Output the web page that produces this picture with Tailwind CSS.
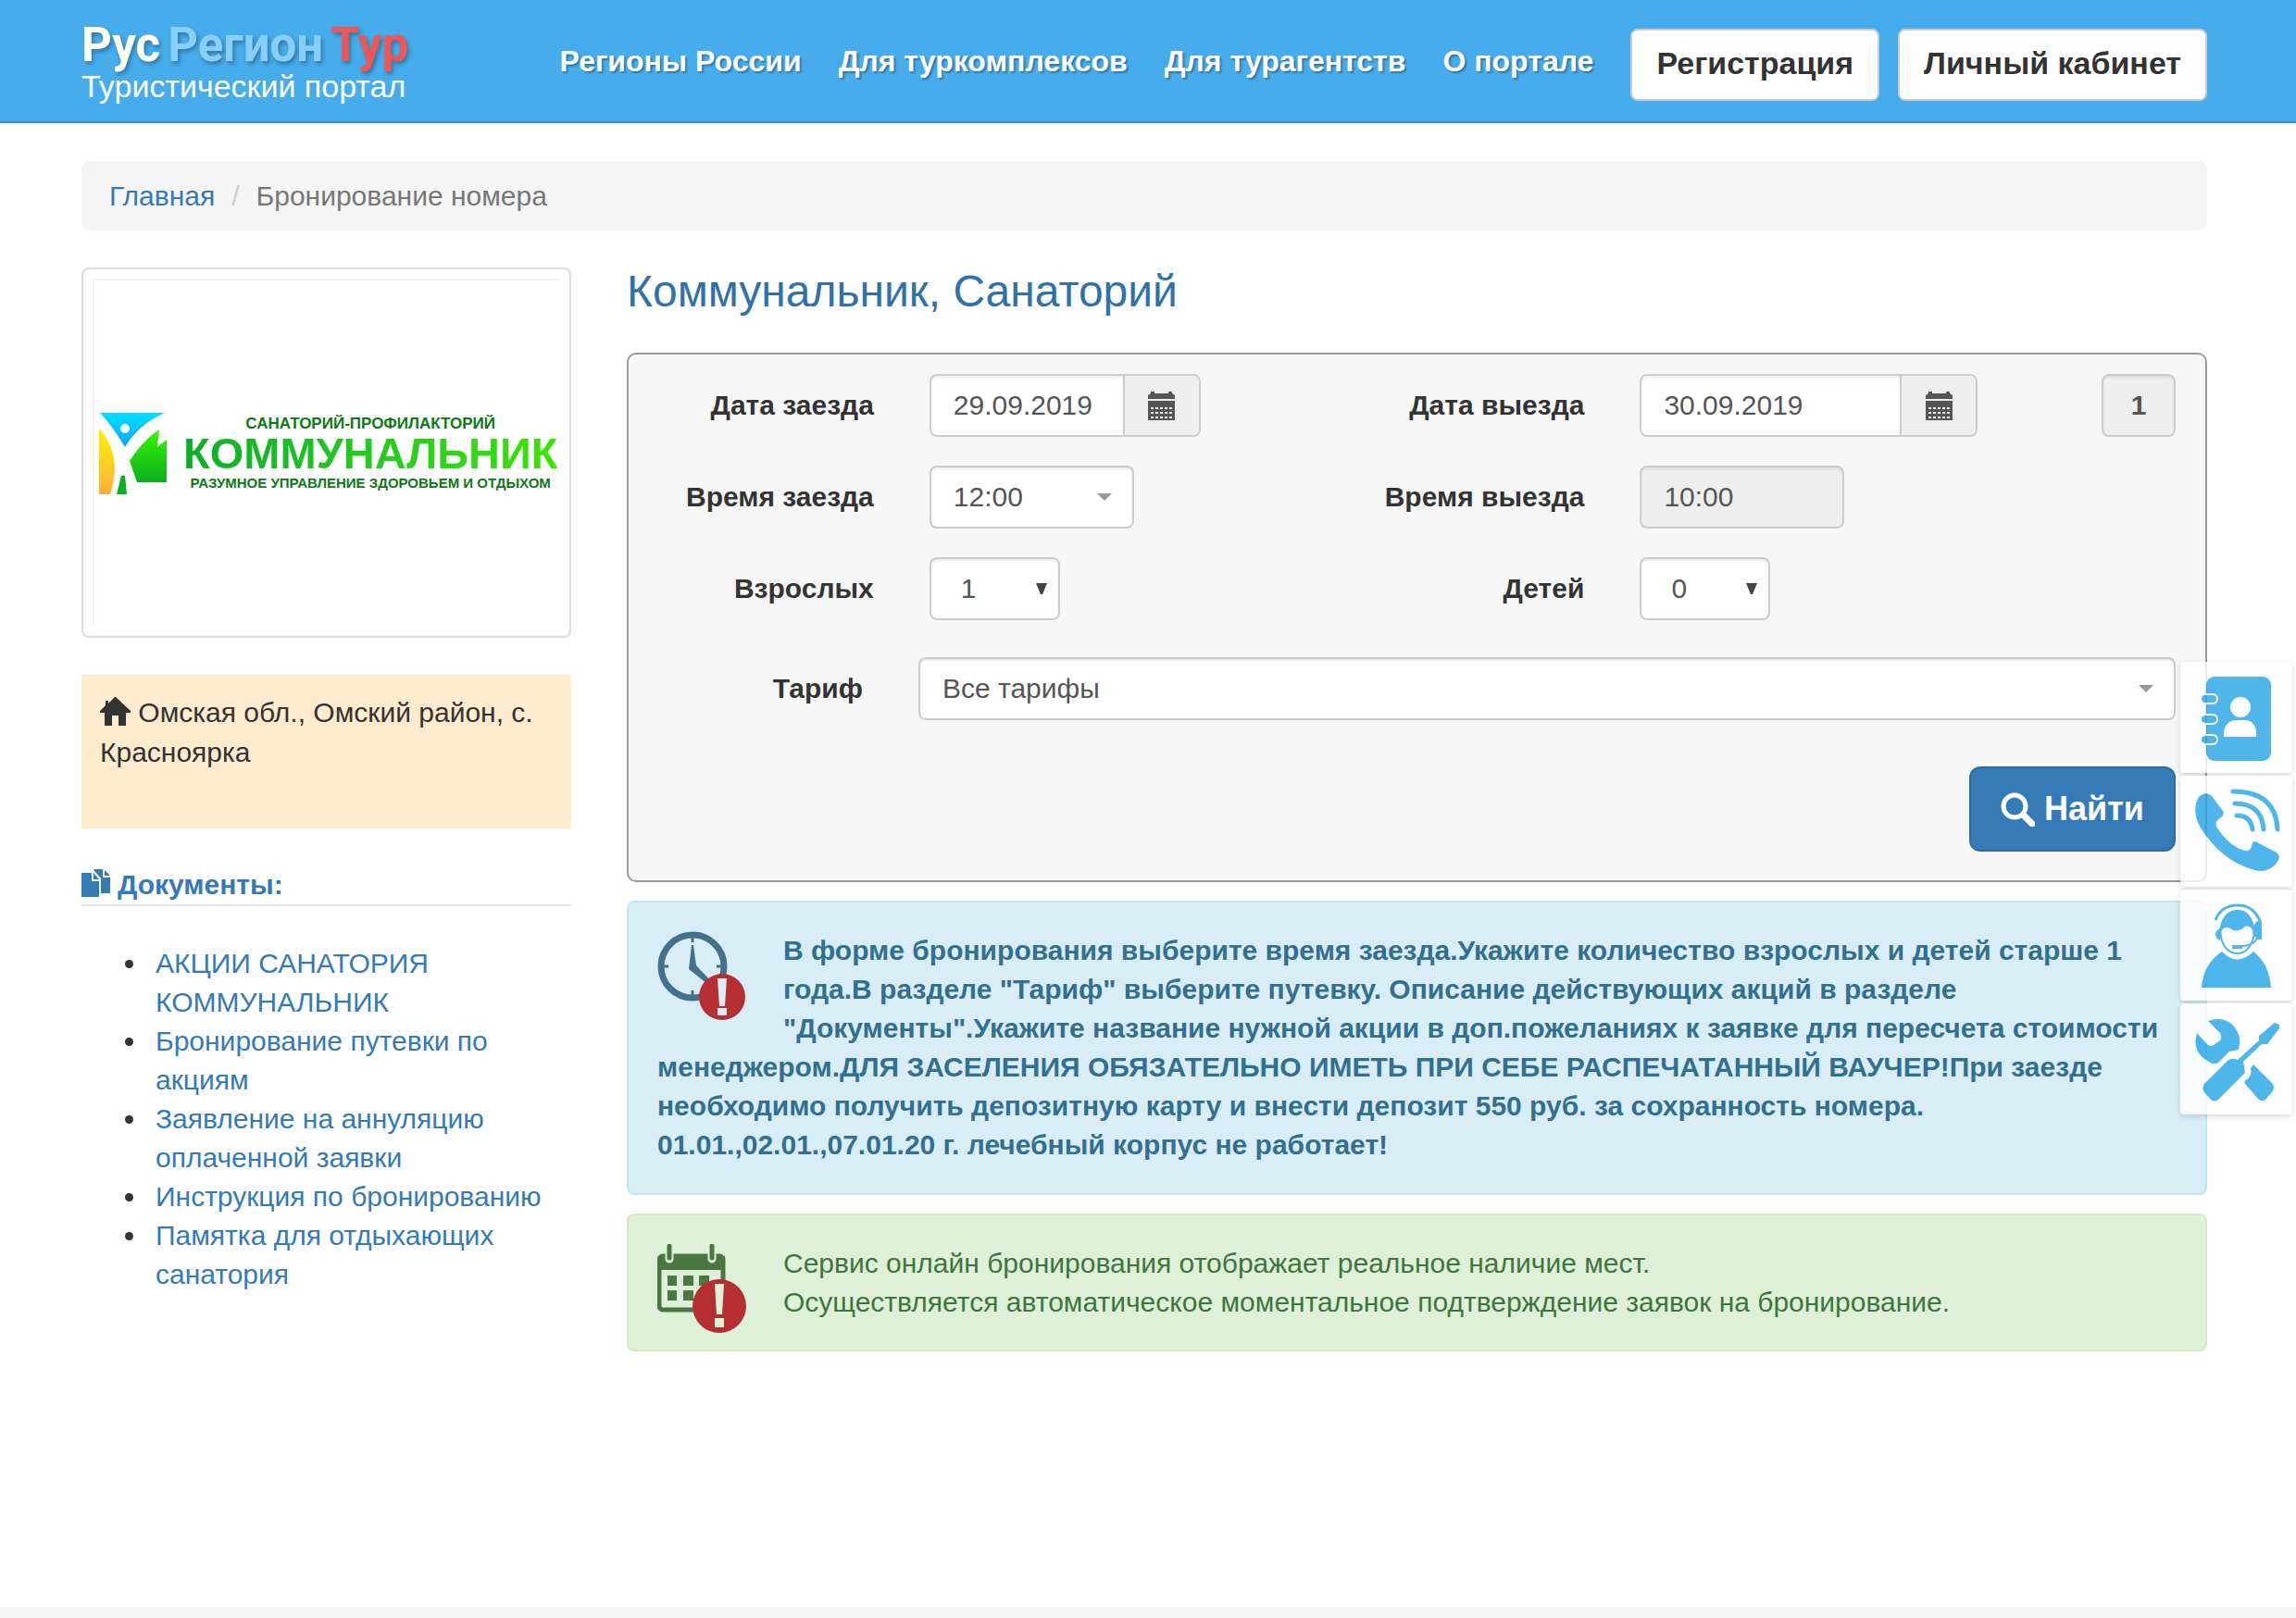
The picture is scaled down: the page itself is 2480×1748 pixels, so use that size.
<!DOCTYPE html>
<html lang="ru">
<head>
<meta charset="utf-8">
<meta name="viewport" content="width=device-width, initial-scale=1">
<title>Бронирование номера</title>
<script src="https://cdn.jsdelivr.net/npm/@tailwindcss/browser@4"></script>
</head>
<body class="flex min-h-screen flex-col bg-white font-['Liberation_Sans',Arial,sans-serif] text-[30px] leading-[42px] text-[#333]">

<header class="border-b-2 border-[#2d8fcf] bg-[#46aceb] pr-24 pl-[88px]">
  <div class="flex h-[131px] items-center justify-between">
    <a href="#" class="flex flex-col pt-1 text-white">
      <span class="flex gap-2 font-[Roboto,sans-serif] text-[51px] leading-[50px] font-bold [text-shadow:2px_3px_4px_rgba(0,0,0,0.3)]"><span class="text-[#fffff0]">Рус</span><span class="text-[#87cefa]">Регион</span><span class="text-[#ef5655]">Тур</span></span>
      <span class="text-[34px] leading-[38px]">Туристический портал</span>
    </a>
    <div class="flex items-center gap-10">
      <nav class="flex gap-10 text-[32px] font-bold text-white [text-shadow:2px_2px_2px_rgba(0,0,0,0.3)]">
        <a href="#">Регионы России</a>
        <a href="#">Для туркомплексов</a>
        <a href="#">Для турагентств</a>
        <a href="#">О портале</a>
      </nav>
      <div class="mt-2 flex gap-5 text-[34px] font-bold">
        <button type="button" class="h-[78px] rounded-lg border-2 border-[#ccc] bg-white px-[26px] pb-1">Регистрация</button>
        <button type="button" class="h-[78px] rounded-lg border-2 border-[#ccc] bg-white px-[26px] pb-1">Личный кабинет</button>
      </div>
    </div>
  </div>
</header>

<main class="pt-[41px] pr-24 pl-[88px]">
  <nav class="flex h-[75px] items-center gap-[18px] rounded-lg bg-[#f5f5f5] px-[30px]" aria-label="Навигация">
    <a href="#" class="text-[#337ab7]">Главная</a><span class="text-[#ccc]">/</span><span class="text-[#777]">Бронирование номера</span>
  </nav>

  <div class="mt-10 grid grid-cols-4 gap-[60px]">
    <aside>
      <div class="rounded-lg border-2 border-[#ddd] p-[10px]">
        <div class="flex h-[376px] items-center gap-[18px] border-t-2 border-l-2 border-[#f3f3f3] pl-[5px]">
          <svg class="h-[89px] w-[73px] shrink-0" viewBox="0 0 73 89" aria-hidden="true">
            <defs>
              <linearGradient id="sky" x1="0" y1="0" x2="0" y2="1"><stop offset="0" stop-color="#00e0ff"/><stop offset="1" stop-color="#00a6ff"/></linearGradient>
              <linearGradient id="sun" x1="0" y1="0" x2="0" y2="1"><stop offset="0" stop-color="#fff200"/><stop offset="1" stop-color="#fbb03b"/></linearGradient>
              <linearGradient id="leaf" x1="0" y1="0" x2="0" y2="1"><stop offset="0" stop-color="#39f500"/><stop offset="1" stop-color="#0aae20"/></linearGradient>
            </defs>
            <path d="M1 0H71Q43 12 28 37Q15 15 1 0Z" fill="url(#sky)"/>
            <circle cx="28" cy="17" r="5" fill="#fff"/>
            <path d="M0 17Q26 46 12 88H0Z" fill="url(#sun)"/>
            <path d="M24 68H28L30 88H19Z" fill="#0aae20"/>
            <path d="M33 52Q47 30 65 18L63 37L73 29V75H41Z" fill="url(#leaf)"/>
          </svg>
          <div class="flex flex-col items-center font-bold whitespace-nowrap text-[#0b7a14]">
            <span class="text-[17px] leading-[18px]">САНАТОРИЙ-ПРОФИЛАКТОРИЙ</span>
            <span class="bg-linear-to-r from-[#0aae28] to-[#39e600] bg-clip-text text-[47px] leading-[46px] text-transparent">КОММУНАЛЬНИК</span>
            <span class="text-[15px] leading-[18px]">РАЗУМНОЕ УПРАВЛЕНИЕ ЗДОРОВЬЕМ И ОТДЫХОМ</span>
          </div>
        </div>
      </div>

      <div class="mt-10 bg-[#ffebcd] px-5 pt-5 pb-[61px]">
        <svg class="mb-2 inline h-[31px] w-[33px]" viewBox="0 0 33 31" aria-hidden="true"><path d="M16 0H17L33 15V17H28V31H20V20H13V31H5V17H0V15L6 9V4H9V7Z" fill="#333"/></svg>
        Омская обл., Омский район, с. Красноярка
      </div>

      <h2 class="mt-10 flex items-center gap-2 border-b-2 border-[#e5e5e5] font-bold text-[#337ab7]">
        <svg class="mb-1 h-[30px] w-[31px]" viewBox="0 0 31 30" aria-hidden="true"><path fill="#337ab7" d="M0 4H11V13H19V30H0ZM13 4L19 11H13ZM13 0H23V9H31V26H21V10L14 2ZM25 1L31 7H25Z"/></svg>
        Документы:
      </h2>
      <ul class="mt-[41px] list-disc pl-[72px]">
        <li class="pl-2"><a href="#" class="text-[#337ab7]">АКЦИИ САНАТОРИЯ КОММУНАЛЬНИК</a></li>
        <li class="pl-2"><a href="#" class="text-[#337ab7]">Бронирование путевки по акциям</a></li>
        <li class="pl-2"><a href="#" class="text-[#337ab7]">Заявление на аннуляцию оплаченной заявки</a></li>
        <li class="pl-2"><a href="#" class="text-[#337ab7]">Инструкция по бронированию</a></li>
        <li class="pl-2"><a href="#" class="text-[#337ab7]">Памятка для отдыхающих санатория</a></li>
      </ul>
    </aside>

    <section class="col-span-3">
      <h1 class="text-[48px] leading-[52px] text-[#3071a9]">Коммунальник, Санаторий</h1>

      <form class="mt-10 rounded-[10px] border-2 border-[#999] bg-[#f7f7f7] pt-[21px] pr-8 pb-[31px]">
        <div class="grid grid-cols-[265fr_421fr_227fr_579fr] items-center gap-x-[60px] gap-y-[31px]">
          <label for="d1" class="text-right font-bold">Дата заезда</label>
          <div class="flex h-[68px] w-[293px] rounded-lg border-2 border-[#ccc] bg-white text-[#555]">
            <input id="d1" type="text" value="29.09.2019" class="min-w-0 flex-1 rounded-l-lg pl-6 shadow-[inset_0_2px_2px_rgba(0,0,0,0.08)]">
            <button type="button" aria-label="Календарь" class="flex w-[82px] items-center justify-center rounded-r-md border-l-2 border-[#ccc] bg-[#eee]">
              <svg class="h-[31px] w-[29px]" viewBox="0 0 29 31" aria-hidden="true"><path fill="#555" d="M3 0H7V2H22V0H26V2L29 4V8H0V4L3 2Z"/><path fill="#555" d="M0 10H29V31H0Z"/><path stroke="#eee" stroke-width="2" stroke-dasharray="3 2" d="M3 18H26M3 23H26M3 28H26"/></svg>
            </button>
          </div>
          <label for="d2" class="text-right font-bold">Дата выезда</label>
          <div class="flex justify-between">
            <div class="flex h-[68px] w-[365px] rounded-lg border-2 border-[#ccc] bg-white text-[#555]">
              <input id="d2" type="text" value="30.09.2019" class="min-w-0 flex-1 rounded-l-lg pl-6 shadow-[inset_0_2px_2px_rgba(0,0,0,0.08)]">
              <button type="button" aria-label="Календарь" class="flex w-[82px] items-center justify-center rounded-r-md border-l-2 border-[#ccc] bg-[#eee]">
                <svg class="h-[31px] w-[29px]" viewBox="0 0 29 31" aria-hidden="true"><path fill="#555" d="M3 0H7V2H22V0H26V2L29 4V8H0V4L3 2Z"/><path fill="#555" d="M0 10H29V31H0Z"/><path stroke="#eee" stroke-width="2" stroke-dasharray="3 2" d="M3 18H26M3 23H26M3 28H26"/></svg>
              </button>
            </div>
            <input type="text" aria-label="Количество суток" value="1" readonly class="h-[68px] w-20 rounded-lg border-2 border-[#ccc] bg-[#eee] text-center font-bold text-[#555] shadow-[inset_0_2px_2px_rgba(0,0,0,0.08)]">
          </div>

          <label for="t1" class="text-right font-bold">Время заезда</label>
          <div class="relative h-[68px] w-[221px]">
            <select id="t1" class="size-full appearance-none rounded-lg border-2 border-[#ccc] bg-white pl-6 text-[#555] shadow-[inset_0_2px_2px_rgba(0,0,0,0.08)]"><option>12:00</option></select>
            <svg class="pointer-events-none absolute top-[30px] right-6 h-2 w-4" viewBox="0 0 16 8" aria-hidden="true"><path d="M0 0H16L8 8Z" fill="#999"/></svg>
          </div>
          <label for="t2" class="text-right font-bold">Время выезда</label>
          <input id="t2" type="text" value="10:00" disabled class="h-[68px] w-[221px] rounded-lg border-2 border-[#ccc] bg-[#eee] pl-6 text-[#555] shadow-[inset_0_2px_2px_rgba(0,0,0,0.08)]">

          <label for="a1" class="text-right font-bold">Взрослых</label>
          <div class="relative h-[68px] w-[141px]">
            <select id="a1" class="size-full appearance-none rounded-lg border-2 border-[#ccc] bg-white pl-8 text-[#555] shadow-[inset_0_2px_2px_rgba(0,0,0,0.08)]"><option>1</option></select>
            <svg class="pointer-events-none absolute top-7 right-[14px] h-3 w-3" viewBox="0 0 12 12" aria-hidden="true"><path d="M0 0H12L7 12H5Z" fill="#444"/></svg>
          </div>
          <label for="c1" class="text-right font-bold">Детей</label>
          <div class="relative h-[68px] w-[141px]">
            <select id="c1" class="size-full appearance-none rounded-lg border-2 border-[#ccc] bg-white pl-8 text-[#555] shadow-[inset_0_2px_2px_rgba(0,0,0,0.08)]"><option>0</option></select>
            <svg class="pointer-events-none absolute top-7 right-[14px] h-3 w-3" viewBox="0 0 12 12" aria-hidden="true"><path d="M0 0H12L7 12H5Z" fill="#444"/></svg>
          </div>
        </div>

        <div class="mt-10 flex items-center gap-[60px]">
          <label for="tar" class="w-[253px] shrink-0 text-right font-bold">Тариф</label>
          <div class="relative h-[68px] flex-1">
            <select id="tar" class="size-full appearance-none rounded-lg border-2 border-[#ccc] bg-white pl-6 text-[#555] shadow-[inset_0_2px_2px_rgba(0,0,0,0.08)]"><option>Все тарифы</option></select>
            <svg class="pointer-events-none absolute top-[30px] right-6 h-2 w-4" viewBox="0 0 16 8" aria-hidden="true"><path d="M0 0H16L8 8Z" fill="#999"/></svg>
          </div>
        </div>

        <div class="mt-[50px] flex justify-end">
          <button type="submit" class="flex h-[92px] items-center gap-[10px] rounded-xl border-2 border-[#2e6da4] bg-[#337ab7] px-8 text-[36px] font-bold text-white">
            <svg class="h-[37px] w-[37px]" viewBox="0 0 37 37" fill="none" stroke="#fff" aria-hidden="true"><circle cx="15" cy="15" r="12" stroke-width="5"/><path d="M25 25L34 34" stroke-width="7" stroke-linecap="round"/></svg>
            Найти
          </button>
        </div>
      </form>

      <div class="mt-5 flow-root rounded-lg border-2 border-[#bce8f1] bg-[#d9edf7] px-[31px] pt-[31px] pb-[31px] font-bold text-[#31708f]">
        <svg class="float-left mr-10 mb-5 h-24 w-24" viewBox="0 0 96 96" aria-hidden="true">
          <circle cx="38" cy="38" r="34" fill="none" stroke="#44708c" stroke-width="7"/>
          <path d="M38 5V12M38 64V71M5 38H12M64 38H71" stroke="#44708c" stroke-width="3"/>
          <path d="M37 15H39L42 37L58 54L54 57L34 41Z" fill="#44708c"/>
          <circle cx="70" cy="71" r="25" fill="#b52e31"/>
          <path d="M65 51H75L73 81H67ZM65 83H75V91H65Z" fill="#d9edf7"/>
        </svg>
        В форме бронирования выберите время заезда.Укажите количество взрослых и детей старше 1 года.В разделе "Тариф" выберите путевку. Описание действующих акций в разделе "Документы".Укажите название нужной акции в доп.пожеланиях к заявке для пересчета стоимости менеджером.ДЛЯ ЗАСЕЛЕНИЯ ОБЯЗАТЕЛЬНО ИМЕТЬ ПРИ СЕБЕ РАСПЕЧАТАННЫЙ ВАУЧЕР!При заезде необходимо получить депозитную карту и внести депозит 550 руб. за сохранность номера. 01.01.,02.01.,07.01.20 г. лечебный корпус не работает!
      </div>

      <div class="mt-5 flow-root rounded-lg border-2 border-[#d6e9c6] bg-[#dff0d8] px-[31px] pt-[31px] pb-[18px] text-[#3c763d]">
        <svg class="float-left mr-10 h-24 w-24" viewBox="0 0 96 96" aria-hidden="true">
          <rect x="2" y="13" width="69" height="58" rx="4" fill="none" stroke="#4a7640" stroke-width="5"/>
          <path d="M1 13H73V28H1Z" fill="#4a7640"/>
          <path d="M13 2V16M59 2V16" stroke="#dff0d8" stroke-width="9" stroke-linecap="round"/>
          <path d="M13 2V15M59 2V15" stroke="#4a7640" stroke-width="5" stroke-linecap="round"/>
          <path d="M11 34H21V45H11ZM28 34H39V45H28ZM45 34H56V45H45ZM11 50H21V61H11ZM28 50H39V61H28Z" fill="#4a7640"/>
          <circle cx="67" cy="67" r="29" fill="#b52e31"/>
          <path d="M62 43H72L70 76H64ZM62 80H72V90H62Z" fill="#dff0d8"/>
        </svg>
        Сервис онлайн бронирования отображает реальное наличие мест.<br>
        Осуществляется автоматическое моментальное подтверждение заявок на бронирование.
      </div>
    </section>
  </div>
</main>

<footer class="mt-auto h-3 bg-[#f5f5f5]"></footer>

<!-- Quick contact panel pinned to the right edge -->
<div class="fixed top-[715px] right-1 flex w-[121px] flex-col gap-[3px] opacity-80">
  <a href="#" aria-label="Контакты" class="block rounded-sm bg-white shadow-[0_2px_6px_rgba(0,0,0,0.2)]">
    <svg class="w-full" viewBox="0 0 121 120"><rect x="28" y="16" width="70" height="91" rx="9" fill="#22a4e6"/><circle cx="65" cy="49" r="11" fill="#fff"/><path d="M47 81V77C47 69 53 63 60 63H70C77 63 82 69 82 77V81Z" fill="#fff"/><g fill="#22a4e6" stroke="#fff" stroke-width="2"><rect x="22" y="35" width="18" height="10" rx="5"/><rect x="22" y="57" width="18" height="10" rx="5"/><rect x="22" y="79" width="18" height="10" rx="5"/></g></svg>
  </a>
  <a href="#" aria-label="Позвонить" class="block rounded-sm bg-white shadow-[0_2px_6px_rgba(0,0,0,0.2)]">
    <svg class="w-full" viewBox="0 0 121 120"><path fill="#22a4e6" d="M20 23Q28 16 34 22L46 38Q48 42 44 45Q37 49 39 55Q52 76 70 81Q76 82 77 76Q78 69 83 72L104 83Q109 87 105 93Q96 106 80 102Q44 92 21 55Q12 37 20 23Z"/><path fill="none" stroke="#22a4e6" stroke-width="5" stroke-linecap="round" d="M57 17Q103 17 105 58M59 30Q88 30 90 58M61 43Q76 43 78 58"/></svg>
  </a>
  <a href="#" aria-label="Поддержка" class="block rounded-sm bg-white shadow-[0_2px_6px_rgba(0,0,0,0.2)]">
    <svg class="w-full" viewBox="0 0 121 120"><path fill="#22a4e6" d="M23 106Q25 80 45 67Q61 84 79 67Q96 80 98 106Z"/><ellipse cx="61.500" cy="46" rx="18" ry="23" fill="#fff" stroke="#22a4e6" stroke-width="2"/><path fill="#22a4e6" d="M44 46Q44 22 62 22Q79 22 79 46Q76 38 70 40Q61 48 54 42Q47 39 44 46ZM43 42V55Q38 53 38 48Q38 44 43 42ZM83 34H88V54H83L80 50V38ZM56 60H67V64H56Z"/><path fill="none" stroke="#22a4e6" stroke-width="3" d="M38 33Q44 17 62 17Q79 17 86 34"/><path fill="none" stroke="#22a4e6" stroke-width="2" d="M66 61Q78 61 83 53"/></svg>
  </a>
  <a href="#" aria-label="Сервис" class="block rounded-sm bg-white shadow-[0_2px_6px_rgba(0,0,0,0.2)]">
    <svg class="w-full" viewBox="0 0 121 120"><g fill="#22a4e6"><path d="M30 19Q48 13 58 25Q67 35 63 50L53 52L41 64Q36 67 31 63Q12 53 18 32L28 43Q32 48 36 45L43 40Q45 37 43 32Z"/><path d="M79 66L99 86Q103 91 99 96L92 104Q88 107 84 103L70 87Q68 84 72 82Q78 78 76 70Z"/><path d="M102 21L107 23V27L94 44L88 44L68 63L70 75L41 104Q37 107 33 104L26 96Q23 91 26 87L51 62Q56 58 62 61L85 40V35Z"/></g></svg>
  </a>
</div>
</body>
</html>
